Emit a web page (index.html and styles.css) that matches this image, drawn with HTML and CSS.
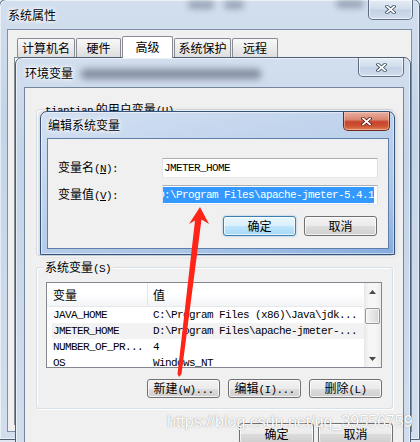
FILE: index.html
```html
<!DOCTYPE html>
<html lang="zh-CN">
<head>
<meta charset="utf-8">
<title>系统属性</title>
<link rel="stylesheet" href="styles.css">
</head>
<body>
<div class="win glass outer">
  <div class="titlebar">
    <span class="title">系统属性</span>
    <span class="haze haze-a"></span>
    <span class="haze haze-b"></span>
    <span class="haze haze-c"></span>
    <div class="close out-close"><svg width="11" height="9" viewBox="0 0 11 9"><path d="M2 1.5L9 7.5M9 1.5L2 7.5" stroke="#3a4a60" stroke-width="3.4" stroke-linecap="square"/><path d="M2 1.5L9 7.5M9 1.5L2 7.5" stroke="#fff" stroke-width="1.7" stroke-linecap="square"/></svg></div>
  </div>
  <div class="client outer-client">
    <div class="tabs">
      <div class="tab t1">计算机名</div>
      <div class="tab t2">硬件</div>
      <div class="tab t3 sel">高级</div>
      <div class="tab t4">系统保护</div>
      <div class="tab t5">远程</div>
    </div>
    <div class="page"></div>
  </div>
</div>

<div class="win glass env">
  <div class="titlebar">
    <span class="title">环境变量</span>
    <span class="haze haze-env"></span>
    <div class="close env-close"><svg width="11" height="9" viewBox="0 0 11 9"><path d="M2 1.5L9 7.5M9 1.5L2 7.5" stroke="#3a4a60" stroke-width="3.4" stroke-linecap="square"/><path d="M2 1.5L9 7.5M9 1.5L2 7.5" stroke="#fff" stroke-width="1.7" stroke-linecap="square"/></svg></div>
  </div>
  <div class="client env-client">
    <div class="group ugroup">
      <span class="legend"><span class="hw">tiantian</span> 的用户变量<span class="hw">(U)</span></span>
    </div>
    <div class="group sgroup">
      <span class="legend">系统变量<span class="hw">(S)</span></span>
      <div class="listview">
        <div class="lv-main">
          <div class="lv-head"><div class="c1">变量</div><div class="c2">值</div></div>
          <div class="lv-row"><div class="c1 mono">JAVA_HOME</div><div class="c2 mono">C:\Program Files (x86)\Java\jdk...</div></div>
          <div class="lv-row hot"><div class="c1 mono">JMETER_HOME</div><div class="c2 mono">D:\Program Files\apache-jmeter-...</div></div>
          <div class="lv-row"><div class="c1 mono">NUMBER_OF_PR...</div><div class="c2 mono">4</div></div>
          <div class="lv-row"><div class="c1 mono">OS</div><div class="c2 mono">Windows_NT</div></div>
        </div>
        <div class="sb">
          <div class="sb-btn"><svg width="7" height="4" viewBox="0 0 7 4"><path d="M0 4L3.5 0L7 4Z" fill="#4a4a4a"/></svg></div>
          <div class="sb-track"><div class="sb-thumb"></div></div>
          <div class="sb-btn"><svg width="7" height="4" viewBox="0 0 7 4"><path d="M0 0L3.5 4L7 0Z" fill="#4a4a4a"/></svg></div>
        </div>
      </div>
      <div class="btnrow">
        <button class="btn">新建<span class="hw">(W)...</span></button>
        <button class="btn">编辑<span class="hw">(I)...</span></button>
        <button class="btn">删除<span class="hw">(L)</span></button>
      </div>
    </div>
    <div class="dlg-btns">
      <button class="btn wide">确定</button>
      <button class="btn wide">取消</button>
    </div>
  </div>
</div>

<div class="win active edit">
  <div class="titlebar">
    <span class="title">编辑系统变量</span>
    <div class="close red"><svg width="11" height="9" viewBox="0 0 11 9"><path d="M2 1.5L9 7.5M9 1.5L2 7.5" stroke="#5a1c12" stroke-width="3.4" stroke-linecap="square"/><path d="M2 1.5L9 7.5M9 1.5L2 7.5" stroke="#fff" stroke-width="1.7" stroke-linecap="square"/></svg></div>
  </div>
  <div class="client edit-client">
    <div class="field">
      <label>变量名<span class="hw">(<u>N</u>):</span></label>
      <div class="input"><span class="mono">JMETER_HOME</span></div>
    </div>
    <div class="field">
      <label>变量值<span class="hw">(<u>V</u>):</span></label>
      <div class="input"><span class="mono seltext">D:\Program Files\apache-jmeter-5.4.1</span></div>
    </div>
    <div class="ebtns">
      <button class="btn default">确定</button>
      <button class="btn">取消</button>
    </div>
  </div>
</div>

<svg class="arrow" width="420" height="442" viewBox="0 0 420 442">
  <polygon points="200,207 209,224 201.5,219.5 181.5,374 179,377 177.5,374 195,220.5 189,224" fill="#ff2418"/>
</svg>

<div class="watermark">https://blog.csdn.net/qq_39556759</div>
</body>
</html>
```

FILE: styles.css
```css
* { box-sizing: border-box; }
html, body { margin: 0; padding: 0; }
body {
  position: relative;
  width: 420px;
  height: 442px;
  overflow: hidden;
  background: #dfe8f2;
  font-family: "Noto Sans CJK SC", sans-serif;
  font-size: 12px;
  line-height: 14px;
  color: #000;
}

.hw, .mono {
  font-family: "Liberation Mono", "Noto Sans CJK SC", monospace;
  font-size: 11px;
  letter-spacing: -0.6px;
}

/* ---------- windows ---------- */
.win {
  position: absolute;
  display: flex;
  flex-direction: column;
  border: 1px solid #4d5f77;
  border-radius: 7px 7px 0 0;
}
.glass {
  background: linear-gradient(180deg, #d3dfee 0%, #c4d5e9 25%, #c9d8eb 55%, #d2deed 100%);
  box-shadow: inset 0 0 0 1px rgba(255,255,255,.55);
}
.active {
  background: linear-gradient(165deg, #d3e0f1 0%, #c0d3ec 40%, #abc5e7 75%, #85abdd 100%);
  box-shadow: inset 0 0 0 1px rgba(255,255,255,.5), 0 0 5px rgba(0,0,0,.18);
  border-color: #34527c;
}
.outer { left: -1px; top: -1px; width: 421px; height: 441px; }
.env { left: 15px; top: 57px; width: 396px; height: 400px; }
.edit { left: 40px; top: 111px; width: 355px; height: 144px; }

.titlebar {
  flex: none;
  display: flex;
  align-items: center;
}
.outer .titlebar { height: 29px; padding-left: 8px; }
.env .titlebar { height: 29px; padding-left: 9px; }
.edit .titlebar { height: 26px; padding-left: 7px; }

.title {
  position: relative;
  z-index: 1;
  white-space: nowrap;
  text-shadow: 0 0 6px #fff, 0 0 4px #fff, 0 0 2px #fff;
}

.haze {
  display: block;
  flex: none;
  height: 8px;
  border-radius: 4px;
  background: rgba(60, 72, 92, .4);
  filter: blur(3px);
}
.haze-a { align-self: flex-start; margin-top: 1px; margin-left: 132px; width: 26px; }
.haze-b { align-self: flex-start; margin-top: 1px; margin-left: 10px; width: 20px; }
.haze-c { align-self: flex-start; margin-top: 0; margin-left: 92px; width: 28px; }
.haze-env { margin-left: 8px; width: 180px; height: 10px; margin-top: 2px; background: rgba(50, 60, 80, .5); filter: blur(3.5px); }

.close {
  margin-left: auto;
  align-self: flex-start;
  display: flex;
  align-items: center;
  justify-content: center;
  border: 1px solid rgba(56, 72, 98, .75);
  border-top: none;
  border-radius: 0 0 5px 5px;
  background: linear-gradient(180deg, #e4ecf5 0%, #d2deec 45%, #c3d2e6 55%, #d3deed 100%);
  box-shadow: inset 0 0 0 1px rgba(255,255,255,.6);
}
.out-close { width: 45px; height: 20px; margin-right: 6px; }
.env-close { width: 46px; height: 19px; margin-right: 6px; }
.close.red {
  width: 47px;
  height: 19px;
  margin-right: 4px;
  border-color: #6f2a1d;
  background: linear-gradient(180deg, #eab1a3 0%, #da8670 42%, #c6442d 55%, #cf5434 80%, #e0855d 100%);
  box-shadow: inset 0 0 0 1px rgba(255,220,210,.45);
}

.client {
  border: 1px solid #7f8fa4;
  background: #f0f0f0;
}

/* ---------- outer window ---------- */
.outer-client {
  flex: 1;
  margin: 0 7px 7px 7px;
  padding: 6px;
  display: flex;
  flex-direction: column;
}
.tabs {
  position: relative;
  z-index: 1;
  display: flex;
  align-items: flex-end;
  gap: 1px;
  height: 21px;
  margin-left: 3px;
}
.tab {
  height: 19px;
  border: 1px solid #898c95;
  border-bottom: none;
  border-radius: 2px 2px 0 0;
  background: linear-gradient(180deg, #f8f8f8 0%, #ececec 50%, #dedede 100%);
  text-align: center;
  line-height: 17px;
  white-space: nowrap;
}
.t1 { width: 58px; }
.t2 { width: 45px; }
.t3 { width: 51px; }
.t4 { width: 57px; }
.t5 { width: 46px; }
.tab.sel {
  height: 22px;
  margin-bottom: -1px;
  background: #fff;
  line-height: 19px;
}
.page {
  flex: 1;
  background: #fff;
  border: 1px solid #898c95;
}

/* ---------- environment window ---------- */
.env-client {
  flex: 1;
  margin: 0 6px 0 8px;
  border-color: #75869c;
}
.group {
  position: relative;
  border: 1px solid #d5dfe5;
  border-radius: 3px;
  box-shadow: inset 1px 1px 0 #fff, 1px 1px 0 #fff;
}
.legend {
  position: absolute;
  left: 6px;
  top: -8px;
  padding: 0 2px;
  background: #f0f0f0;
  line-height: 14px;
  white-space: nowrap;
}
.ugroup { margin: 21px 10px 0 11px; height: 147px; }
.sgroup { margin: 11px 10px 0 11px; height: 142px; padding: 14px 10px 10px 9px; }

.listview {
  display: flex;
  height: 86px;
  border: 1px solid #828790;
  background: #fff;
}
.lv-main { flex: 1; overflow: hidden; }
.lv-head {
  display: flex;
  height: 24px;
  border-bottom: 1px solid #e6e8ec;
  background: linear-gradient(180deg, #ffffff 0%, #ffffff 45%, #f3f4f6 100%);
}
.lv-head .c1, .lv-head .c2 { padding-top: 5px; line-height: 14px; }
.lv-head .c1 { border-right: 1px solid #e3e5e8; }
.c1 { width: 101px; flex: none; padding-left: 6px; white-space: nowrap; }
.c2 { padding-left: 5px; white-space: nowrap; }
.lv-row {
  display: flex;
  height: 16px;
  line-height: 16px;
}
.lv-row.hot { background: linear-gradient(90deg, transparent 5px, #f2f2f2 5px); }

.sb {
  width: 17px;
  flex: none;
  display: flex;
  flex-direction: column;
  background: linear-gradient(90deg, #e8e8e8 0%, #f6f6f6 30%, #f6f6f6 70%, #ebebeb 100%);
}
.sb-btn {
  flex: none;
  height: 17px;
  display: flex;
  align-items: center;
  justify-content: center;
}
.sb-track { flex: 1; padding-top: 8px; }
.sb-thumb {
  height: 16px;
  margin: 0 1px;
  border: 1px solid #979797;
  border-radius: 2px;
  background: linear-gradient(90deg, #f4f4f4 0%, #e6e6e6 50%, #d5d5d5 100%);
  box-shadow: inset 0 0 0 1px rgba(255,255,255,.6);
}

.btnrow {
  margin-top: 11px;
  display: flex;
  justify-content: flex-end;
  gap: 8px;
}
.dlg-btns {
  margin: 14px 10px 0 0;
  display: flex;
  justify-content: flex-end;
  gap: 4px;
}

.btn {
  width: 73px;
  height: 19px;
  padding: 0;
  font: inherit;
  color: #000;
  line-height: 14px;
  white-space: nowrap;
  border: 1px solid #707070;
  border-radius: 3px;
  background: linear-gradient(180deg, #f2f2f2 0%, #ebebeb 50%, #dddddd 51%, #cfcfcf 100%);
  box-shadow: inset 0 0 0 1px rgba(255,255,255,.75);
}
.btn.wide { width: 75px; height: 21px; }
.btn.default {
  height: 20px;
  border-color: #3c7fb1;
  background: linear-gradient(180deg, #eaf6fd 0%, #d9f0fc 50%, #bee6fd 51%, #a7d9f5 100%);
  box-shadow: inset 0 0 0 1px rgba(255,255,255,.7), 0 0 2px rgba(60,140,210,.6);
}

/* ---------- edit window ---------- */
.edit-client {
  flex: 1;
  margin: 0 5px 5px 6px;
  padding: 19px 10px 0 10px;
  border-color: #5e7fa9;
}
.field {
  display: flex;
  align-items: center;
  height: 20px;
}
.field + .field { margin-top: 7px; }
.field label { width: 104px; flex: none; white-space: nowrap; }
.input {
  width: 216px;
  height: 20px;
  display: flex;
  align-items: center;
  overflow: hidden;
  padding-left: 1px;
  background: #fff;
  border: 1px solid;
  border-color: #abadb3 #dbdfe6 #e3e9ef #e2e3ea;
  white-space: nowrap;
}
.seltext {
  display: inline-block;
  flex: none;
  margin-left: -6px;
  line-height: 16px;
  background: #3399ff;
  color: #fff;
}
.ebtns {
  margin-top: 11px;
  padding-right: 1px;
  display: flex;
  justify-content: flex-end;
  gap: 8px;
}
.ebtns .btn { height: 20px; }

/* ---------- overlays ---------- */
.arrow {
  position: absolute;
  left: 0;
  top: 0;
  pointer-events: none;
}
.watermark {
  position: absolute;
  left: 167px;
  top: 413px;
  font-family: "Liberation Sans", sans-serif;
  font-size: 16px;
  line-height: 18px;
  color: #fff;
  text-shadow: 0 0 1px rgba(0,0,0,.35), 0 0 2px rgba(0,0,0,.15);
  white-space: nowrap;
  pointer-events: none;
}
```
